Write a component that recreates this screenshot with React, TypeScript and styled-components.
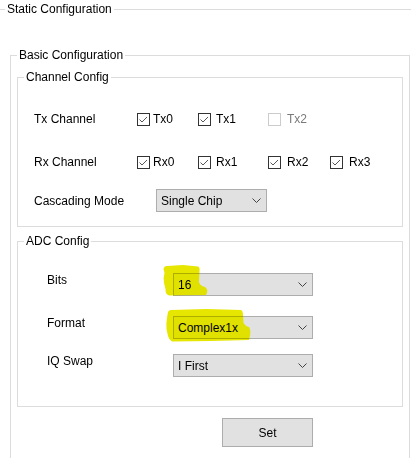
import React from "react";
import styled, { createGlobalStyle } from "styled-components";

const GlobalStyle = createGlobalStyle`
  * { box-sizing: border-box; }
  html, body { margin: 0; padding: 0; background: #ffffff; overflow: hidden; }
  body {
    font-family: "Liberation Sans", Arial, sans-serif;
    font-size: 12px;
    line-height: 14px;
    color: #000000;
  }
`;

const Page = styled.div`
  width: 411px;
  height: 458px;
  overflow: hidden;
`;

const OuterGroup = styled.fieldset`
  margin: 2px 0 0 -3px;
  padding: 32px 0 0 7px;
  border: 1px solid #dcdcdc;
  width: 430px;
  height: 480px;
  min-width: 0;
`;

const BasicGroup = styled.fieldset`
  margin: 0 0 0 5px;
  padding: 8px 6px 0 6px;
  border: 1px solid #dcdcdc;
  width: 400px;
  height: 430px;
  min-width: 0;
`;

const SubGroup = styled.fieldset<{ $top?: number; $pt: number; $pb: number }>`
  margin: ${(p) => p.$top ?? 0}px 0 0 0;
  padding: ${(p) => p.$pt}px 6px ${(p) => p.$pb}px 6px;
  border: 1px solid #dcdcdc;
  width: 100%;
  min-width: 0;
`;

const Legend = styled.legend`
  padding: 0 2px;
  font-size: 12px;
  line-height: 14px;
  color: #000;
`;

const Content = styled.div<{ $indent: number }>`
  padding-left: ${(p) => p.$indent}px;
  display: flex;
  flex-direction: column;
`;

const CheckGrid = styled.div`
  display: grid;
  grid-template-columns: 103px 61px 70px 62px auto;
  grid-auto-rows: 14px;
  row-gap: 29px;
  align-items: center;
`;

const RowLabel = styled.span`
  white-space: nowrap;
`;

const CheckItem = styled.label<{ $disabled?: boolean; $gap: number }>`
  display: flex;
  align-items: center;
  gap: ${(p) => p.$gap}px;
  color: ${(p) => (p.$disabled ? "#7a7a7a" : "#000")};
  white-space: nowrap;
`;

const Box = styled.span<{ $disabled?: boolean }>`
  width: 13px;
  height: 13px;
  border: 1px solid ${(p) => (p.$disabled ? "#cccccc" : "#333333")};
  background: #fff;
  display: flex;
  align-items: center;
  justify-content: center;
  flex: none;
`;

const ComboRow = styled.div<{ $top: number; $labelWidth: number; $align: string }>`
  display: flex;
  align-items: ${(p) => p.$align};
  margin-top: ${(p) => p.$top}px;
  & > ${RowLabel} {
    width: ${(p) => p.$labelWidth}px;
    flex: none;
  }
`;

const SelectWrap = styled.div`
  position: relative;
`;

const Select = styled.div<{ $width: number }>`
  width: ${(p) => p.$width}px;
  height: 23px;
  background: #e1e1e1;
  border: 1px solid #adadad;
  display: flex;
  align-items: center;
  justify-content: space-between;
  padding: 0 5px 0 4px;
  white-space: nowrap;
`;

const Marker = styled.svg`
  position: absolute;
  mix-blend-mode: darken;
  pointer-events: none;
`;

const SetButton = styled.button`
  margin: 11px 0 0 205px;
  width: 91px;
  height: 29px;
  background: #e1e1e1;
  border: 1px solid #adadad;
  font-family: "Liberation Sans", Arial, sans-serif;
  font-size: 12px;
  color: #000;
  padding: 0;
  display: block;
`;

const Check = () => (
  <svg width="11" height="11" viewBox="0 0 11 11">
    <polyline points="1.5,5.5 4,8 9,3" fill="none" stroke="#444" strokeWidth="0.9" />
  </svg>
);

const Chevron = () => (
  <svg width="9" height="5" viewBox="0 0 9 5">
    <polyline points="0.5,0.5 4.5,4.5 8.5,0.5" fill="none" stroke="#444" strokeWidth="1" />
  </svg>
);

const CheckBox = ({ label, checked, disabled, gap = 3 }: { label: string; checked?: boolean; disabled?: boolean; gap?: number }) => (
  <CheckItem $disabled={disabled} $gap={gap}>
    <Box $disabled={disabled}>{checked && <Check />}</Box>
    {label}
  </CheckItem>
);

const Combo = ({ value, width }: { value: string; width: number }) => (
  <Select $width={width} role="combobox">
    <span>{value}</span>
    <Chevron />
  </Select>
);

const YELLOW = "#e6e600";

export default function App() {
  return (
    <Page>
      <GlobalStyle />
      <OuterGroup>
        <Legend>Static Configuration</Legend>
        <BasicGroup>
          <Legend>Basic Configuration</Legend>
          <SubGroup $pt={28} $pb={14}>
            <Legend>Channel Config</Legend>
            <Content $indent={10}>
              <CheckGrid>
                <RowLabel>Tx Channel</RowLabel>
                <CheckBox label="Tx0" checked />
                <CheckBox label="Tx1" checked gap={5} />
                <CheckBox label="Tx2" disabled gap={6} />
                <span />
                <RowLabel>Rx Channel</RowLabel>
                <CheckBox label="Rx0" checked />
                <CheckBox label="Rx1" checked gap={5} />
                <CheckBox label="Rx2" checked gap={6} />
                <CheckBox label="Rx3" checked gap={6} />
              </CheckGrid>
              <ComboRow $top={20} $labelWidth={122} $align="center">
                <RowLabel>Cascading Mode</RowLabel>
                <Combo value="Single Chip" width={111} />
              </ComboRow>
            </Content>
          </SubGroup>
          <SubGroup $top={7} $pt={25} $pb={29}>
            <Legend>ADC Config</Legend>
            <Content $indent={23}>
              <ComboRow $top={0} $labelWidth={126} $align="flex-start">
                <RowLabel>Bits</RowLabel>
                <SelectWrap>
                  <Combo value="16" width={140} />
                  <Marker width="45" height="31" viewBox="0 0 45 31" style={{ left: -10, top: -8 }}>
                    <path
                      d="M4 1 L20 0 L35 1.5 Q37 2 36.5 6 L36 17 Q37 21 42 22 Q45 24 44 28 L43 30 L6 30.5 Q2 29 2.5 24 L1 18 Q0 13 1.5 8 L0.5 4 Q1 1 4 1 Z"
                      fill={YELLOW}
                    />
                  </Marker>
                </SelectWrap>
              </ComboRow>
              <ComboRow $top={20} $labelWidth={126} $align="flex-start">
                <RowLabel>Format</RowLabel>
                <SelectWrap>
                  <Combo value="Complex1x" width={140} />
                  <Marker width="85" height="33" viewBox="0 0 85 33" style={{ left: -7, top: -7 }}>
                    <path
                      d="M5 1 L40 0 L75 1 Q77 2 77 6 L77.5 14 Q79 17 83 18 Q85 21 84 27 L83 31 L45 32 L6 32.5 Q3 31 2 27 L0.5 20 Q0 14 1 9 L2 3 Q3 1 5 1 Z"
                      fill={YELLOW}
                    />
                  </Marker>
                </SelectWrap>
              </ComboRow>
              <ComboRow $top={15} $labelWidth={126} $align="flex-start">
                <RowLabel>IQ Swap</RowLabel>
                <Combo value="I First" width={140} />
              </ComboRow>
            </Content>
          </SubGroup>
          <SetButton type="button">Set</SetButton>
        </BasicGroup>
      </OuterGroup>
    </Page>
  );
}
